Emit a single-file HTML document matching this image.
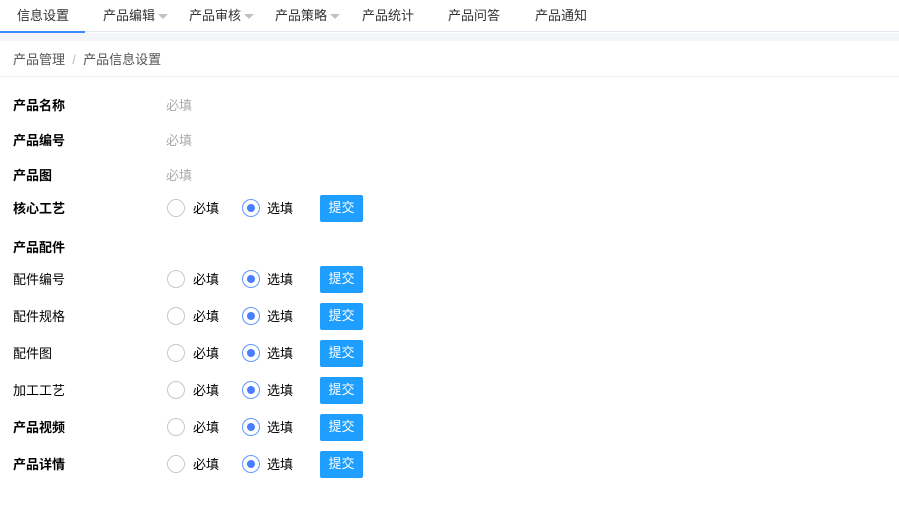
<!DOCTYPE html>
<html><head><meta charset="utf-8"><style>
*{margin:0;padding:0;box-sizing:border-box}
body{width:899px;height:522px;background:#fff;font-family:"Liberation Sans","Noto Sans CJK SC",sans-serif;font-size:13px;color:#333;position:relative;overflow:hidden}
.nav{position:absolute;left:0;top:0;width:899px;height:32px;border-bottom:1px solid #e2e6ee}
.nav span{position:absolute;top:5px;font-size:13px;color:#333}
.tri{display:inline-block;width:0;height:0;border-left:5px solid transparent;border-right:5px solid transparent;border-top:5px solid #c2c2c2;margin-left:3px;vertical-align:middle}
.act{position:absolute;left:0;top:31px;width:85px;height:2px;background:#3c8cff}
.band{position:absolute;left:0;top:33px;width:899px;height:8px;background:#f3f5f9}
.bc{position:absolute;left:13px;top:49px;color:#555}
.bcline{position:absolute;left:0;top:76px;width:899px;height:1px;background:#f0f0f0}
.lab{position:absolute;left:13px;color:#000}
.b{font-weight:bold}
.ph{position:absolute;left:166px;color:#aaa}
.r{position:absolute;width:18px;height:18px;border-radius:50%;border:1px solid #c8c8c8}
.r.on{border-color:#5f95ff}
.r.on:after{content:"";position:absolute;left:4px;top:4px;width:8px;height:8px;border-radius:50%;background:#4a7dff}
.t{position:absolute;color:#000}
.btn{position:absolute;left:320px;width:43px;height:27px;background:#1e9fff;color:#fff;border-radius:2px;text-align:center;line-height:26px;font-size:13px}
</style></head><body>
<div class="nav">
<span style="left:17px">信息设置</span>
<span style="left:103px">产品编辑<i class="tri"></i></span>
<span style="left:189px">产品审核<i class="tri"></i></span>
<span style="left:275px">产品策略<i class="tri"></i></span>
<span style="left:362px">产品统计</span>
<span style="left:448px">产品问答</span>
<span style="left:535px">产品通知</span>
</div>
<div class="act"></div>
<div class="band"></div>
<div class="bc">产品管理 &nbsp;<span style="color:#bbb">/</span>&nbsp; 产品信息设置</div>
<div class="bcline"></div>

<div class="lab b" style="top:95px">产品名称</div><div class="ph" style="top:95px">必填</div>
<div class="lab b" style="top:130px">产品编号</div><div class="ph" style="top:130px">必填</div>
<div class="lab b" style="top:165px">产品图</div><div class="ph" style="top:165px">必填</div>
<div class="lab b" style="top:237px">产品配件</div>

<div id="rows"></div>
<script>
var rows=[["核心工艺",208,1],["配件编号",279,0],["配件规格",316,0],["配件图",353,0],["加工工艺",390,0],["产品视频",427,1],["产品详情",464,1]];
var h="";
rows.forEach(function(r){var c=r[1];
h+='<div class="lab'+(r[2]?' b':'')+'" style="top:'+(c-10)+'px">'+r[0]+'</div>';
h+='<div class="r" style="left:167px;top:'+(c-9)+'px"></div><div class="t" style="left:193px;top:'+(c-10)+'px">必填</div>';
h+='<div class="r on" style="left:242px;top:'+(c-9)+'px"></div><div class="t" style="left:267px;top:'+(c-10)+'px">选填</div>';
h+='<div class="btn" style="top:'+(c-13)+'px">提交</div>';});
document.getElementById("rows").innerHTML=h;
</script>
</body></html>
